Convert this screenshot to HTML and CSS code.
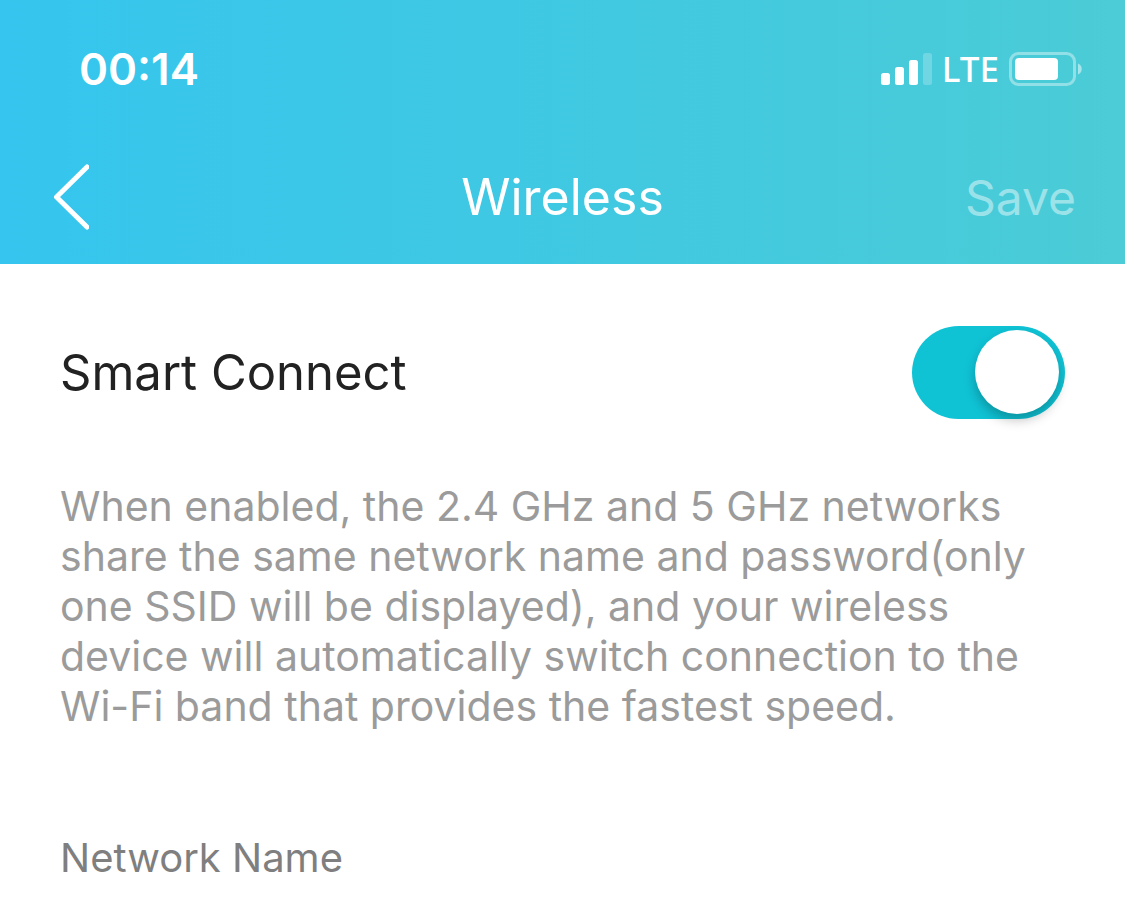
FILE: index.html
```html
<!DOCTYPE html>
<html lang="en">
<head>
<meta charset="utf-8">
<meta name="viewport" content="width=device-width, initial-scale=1">
<title>Wireless</title>
<link rel="stylesheet" href="styles.css">
</head>
<body>
<header class="header">
  <div class="status-bar">
    <time class="clock">00:14</time>
    <div class="indicators">
      <svg class="signal" viewBox="0 0 51 32" aria-hidden="true">
        <rect x="0" y="20" width="9" height="12" rx="2.500"/>
        <rect x="14" y="14" width="9" height="18" rx="2.500"/>
        <rect x="28" y="7" width="9" height="25" rx="2.500"/>
        <rect x="42" y="0" width="9" height="32" rx="2.500" opacity=".22"/>
      </svg>
      <span class="carrier">LTE</span>
      <svg class="battery" viewBox="0 0 73 34" aria-hidden="true">
        <rect x="1.5" y="1.5" width="64" height="31" rx="8" fill="none" stroke="#fff" stroke-width="3" opacity=".4"/>
        <rect x="6" y="6" width="43" height="22" rx="4"/>
        <path d="M69 11.500c5 2 5 9 0 11z" opacity=".5"/>
      </svg>
    </div>
  </div>
  <nav class="nav-bar">
    <button class="back" aria-label="Back">
      <svg class="chevron" viewBox="-5 0 40 66" aria-hidden="true"><path d="M33 3 2.500 33 33 63"/></svg>
    </button>
    <h1 class="title">Wireless</h1>
    <button class="save" disabled>Save</button>
  </nav>
</header>
<main class="content">
  <div class="setting">
    <label class="setting-name" for="smart-connect">Smart Connect</label>
    <input class="switch" id="smart-connect" type="checkbox" role="switch" checked>
  </div>
  <p class="description">When enabled, the 2.4 GHz and 5 GHz networks share the same network name and password(only one SSID will be displayed), and your wireless device will automatically switch connection to the Wi-Fi band that provides the fastest speed.</p>
  <h2 class="section-name">Network Name</h2>
</main>
</body>
</html>
```
FILE: styles.css
```css
* { box-sizing: border-box; }
body {
  margin: 0;
  background: #fff;
  font-family: Inter, "Liberation Sans", sans-serif;
}
.header {
  padding-top: 38px;
  color: #fff;
  background: linear-gradient(90deg, #35c5ee, #4bccd6);
}
.status-bar {
  display: flex;
  align-items: center;
  justify-content: space-between;
  height: 62px;
  padding: 0 43px 0 79px;
}
.clock { font-size: 44px; font-weight: 600; }
.indicators { display: flex; align-items: center; gap: 10px; }
.signal { width: 51px; height: 32px; fill: #fff; }
.carrier {
  font-family: "Noto Sans", "Open Sans", sans-serif;
  font-size: 35px;
  font-weight: 500;
  line-height: 42px;
}
.battery { width: 73px; height: 34px; fill: #fff; }
.nav-bar {
  display: grid;
  grid-template-columns: 1fr auto 1fr;
  align-items: center;
  height: 164px;
  padding: 30px 49px 0;
}
.back, .save {
  padding: 0;
  border: 0;
  background: none;
  color: #fff;
  font: inherit;
}
.back { justify-self: start; }
.chevron {
  display: block;
  width: 40px;
  height: 66px;
  fill: none;
  stroke: #fff;
  stroke-width: 5;
  stroke-linecap: round;
  stroke-linejoin: round;
}
.title { margin: 0; font-size: 50px; font-weight: 400; }
.save { justify-self: end; font-size: 48px; opacity: .45; }
.content { padding: 62px 60px 16px; }
.setting {
  display: flex;
  align-items: center;
  justify-content: space-between;
  margin-bottom: 62px;
}
.setting-name { font-size: 49px; color: #222; }
.switch {
  appearance: none;
  width: 153px;
  height: 93px;
  margin: 0;
  padding: 4px 6px;
  border-radius: 48px;
  background: #ccc;
}
.switch::before {
  content: "";
  display: block;
  width: 84px;
  height: 84px;
  border-radius: 50%;
  background: #fff;
  box-shadow: 0 6px 12px rgba(0, 0, 0, .25);
}
.switch:checked { background: #0fc3d5; }
.switch:checked::before { margin-left: auto; }
.description {
  margin: 0 0 102px;
  color: #9b9b9b;
  font-size: 41px;
  line-height: 50px;
}
.section-name {
  margin: 0;
  color: #7f7f7f;
  font-size: 40px;
  line-height: 50px;
  font-weight: 400;
}
```
